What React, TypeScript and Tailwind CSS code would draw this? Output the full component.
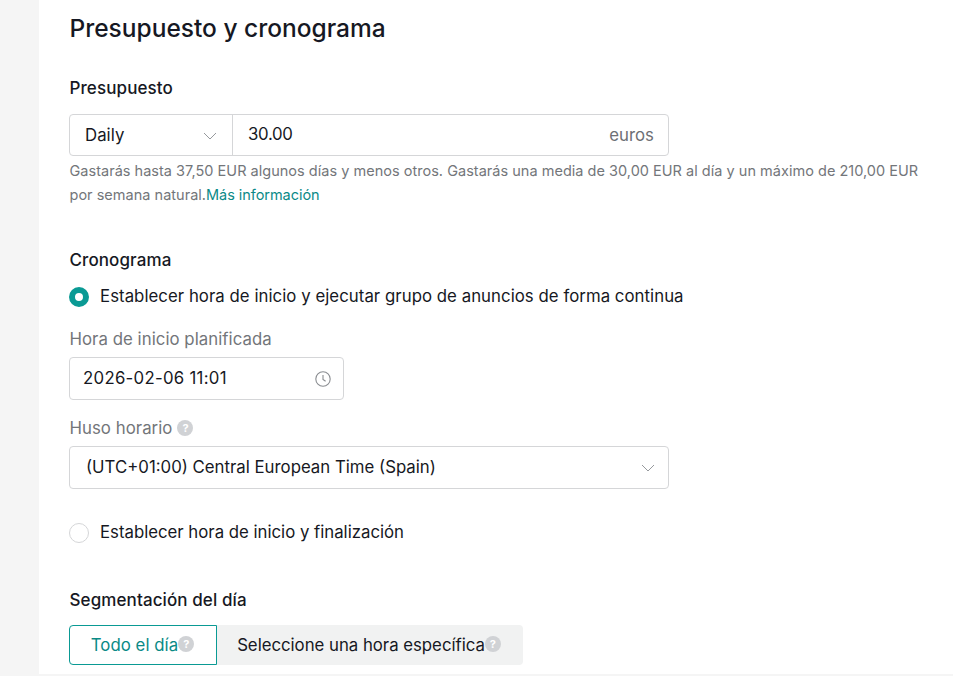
import React from "react";

function Chevron() {
  return (
    <svg width="14" height="8" viewBox="0 0 14 8" fill="none" className="shrink-0">
      <path d="M1 1l6 6 6-6" stroke="#96999d" strokeWidth="1" />
    </svg>
  );
}

function Help() {
  return (
    <span className="inline-flex h-4 w-4 shrink-0 items-center justify-center rounded-full bg-[#d0d2d5] text-[11px] font-bold leading-none tracking-normal text-white">
      ?
    </span>
  );
}

export default function App() {
  return (
    <div className="h-[676px] w-[953px] overflow-hidden bg-[#f5f5f5] pl-[39px] font-['Inter',sans-serif] text-[16.8px] tracking-[0.04px] text-[#161823]">
      <div className="h-[674px] overflow-hidden bg-white pl-[30px]">
        <h1 className="pl-[0.5px] pt-[12px] text-[24.5px] font-medium leading-[32px] tracking-normal">Presupuesto y cronograma</h1>

        <h2 className="mt-[32px] pl-[0.5px] text-[17px] font-medium leading-[24px] tracking-[0.1px]">Presupuesto</h2>
        <div className="mt-[14px] flex h-[42px] w-[600px] rounded border border-[#d5d6d8]">
          <div className="flex w-[163px] items-center justify-between border-r border-[#d5d6d8] pl-[15px] pr-[15px] pt-[2px]">
            <span>Daily</span>
            <Chevron />
          </div>
          <div className="flex flex-1 items-center justify-between pl-[15px] pr-[14px]">
            <span className="-mt-[1px] tracking-[-0.3px]">30.00</span>
            <span className="mt-[2px] text-[#6d7075]">euros</span>
          </div>
        </div>
        <p className="mt-[3px] w-[860px] pl-[0.5px] text-[14.5px] leading-[24px] tracking-[0.02px] text-[#73767a]">
          Gastarás hasta 37,50 EUR algunos días y menos otros. Gastarás una media de 30,00 EUR al día y un máximo de 210,00 EUR por semana natural.
          <span className="tracking-[-0.05px] text-[#0b8a88]">Más información</span>
        </p>

        <h2 className="mt-[41px] pl-[0.5px] text-[17px] font-medium leading-[24px] tracking-[0.1px]">Cronograma</h2>
        <div className="mt-[13px] flex h-[24px] items-center gap-[11px]">
          <span className="h-5 w-5 rounded-full border-[6px] border-[#0a9a94] bg-white" />
          <span>Establecer hora de inicio y ejecutar grupo de anuncios de forma continua</span>
        </div>
        <div className="mt-[18px] pl-[0.5px] leading-[24px] text-[#73767a]">Hora de inicio planificada</div>
        <div className="mt-[6px] flex h-[43px] w-[275px] items-center justify-between rounded border border-[#d5d6d8] pl-[13px] pr-[12px]">
          <span className="tracking-[0.28px]">2026-02-06 11:01</span>
          <svg width="16" height="16" viewBox="0 0 16 16" fill="none">
            <circle cx="8" cy="8" r="7.2" stroke="#8a8d91" strokeWidth="1.1" />
            <path d="M8 4v4.4l2.6 1.9" stroke="#8a8d91" strokeWidth="1.1" />
          </svg>
        </div>
        <div className="mt-[16px] flex items-center gap-[5px] pl-[0.5px] leading-[24px] text-[#73767a]">
          <span>Huso horario</span>
          <Help />
        </div>
        <div className="mt-[6px] flex h-[43px] w-[600px] items-center justify-between rounded border border-[#d5d6d8] pl-[16px] pr-[13px]">
          <span className="tracking-[0px]">(UTC+01:00) Central European Time (Spain)</span>
          <Chevron />
        </div>
        <div className="mt-[32px] flex h-[24px] items-center gap-[11px]">
          <span className="h-5 w-5 rounded-full border border-[#d5d6d8] bg-white" />
          <span className="tracking-[-0.01px]">Establecer hora de inicio y finalización</span>
        </div>

        <h2 className="mt-[43px] pl-[0.5px] text-[17px] font-medium leading-[24px] tracking-[0.1px]">Segmentación del día</h2>
        <div className="mt-[13px] flex h-[40px] w-[454px] rounded bg-[#f1f2f2]">
          <div className="flex w-[148px] items-center justify-center rounded-l border border-[#0a9a94] bg-white pr-[1px] text-[#0a8a86]">
            <span className="mt-[2px]">Todo el día</span>
            <span className="-mt-[2px] flex"><Help /></span>
          </div>
          <div className="flex flex-1 items-center justify-center pr-[2px]">
            <span className="mt-[2px] tracking-[-0.02px]">Seleccione una hora específica</span>
            <span className="-mt-[2px] flex"><Help /></span>
          </div>
        </div>
      </div>
    </div>
  );
}
